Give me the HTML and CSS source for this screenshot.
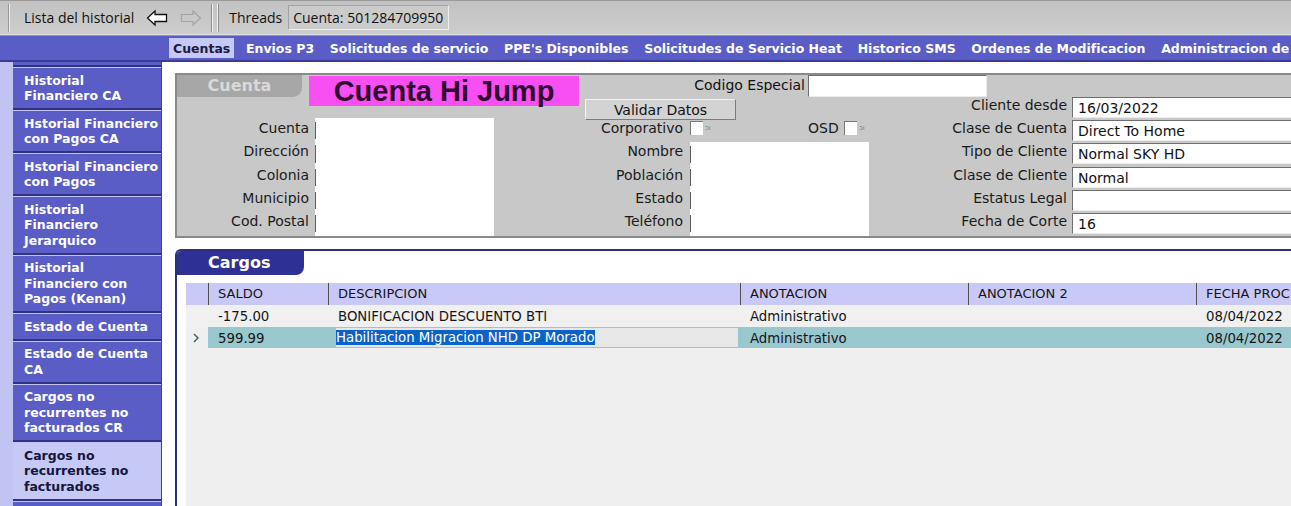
FILE: index.html
```html
<!DOCTYPE html>
<html lang="es">
<head>
<meta charset="utf-8">
<title>Cargos no recurrentes</title>
<link rel="stylesheet" href="styles.css">
</head>
<body>
<header class="toolbar">
  <span class="tb-sep"></span>
  <span class="tb-text tb-hist">Lista del historial</span>
  <svg class="tb-arrow back" width="22" height="18" viewBox="0 0 22 18"><path d="M1.5 9 L9 2 L9 5.5 L20.5 5.5 L20.5 12.5 L9 12.5 L9 16 Z" fill="#fff" stroke="#111" stroke-width="1.3"/></svg>
  <svg class="tb-arrow fwd" width="22" height="18" viewBox="0 0 22 18"><path d="M20.5 9 L13 2 L13 5.5 L1.5 5.5 L1.5 12.5 L13 12.5 L13 16 Z" fill="none" stroke="#a4a4a4" stroke-width="1.2"/></svg>
  <span class="tb-sep2"></span>
  <span class="tb-text tb-threads">Threads</span>
  <span class="tb-box">Cuenta: 501284709950</span>
</header>

<nav class="tabs">
  <span class="tab active">Cuentas</span>
  <span class="tab">Envios P3</span>
  <span class="tab">Solicitudes de servicio</span>
  <span class="tab">PPE's Disponibles</span>
  <span class="tab">Solicitudes de Servicio Heat</span>
  <span class="tab">Historico SMS</span>
  <span class="tab">Ordenes de Modificacion</span>
  <span class="tab">Administracion de</span>
</nav>

<div class="main">
  <aside class="side">
    <div class="side-item tail"></div>
    <div class="side-item">Historial<br>Financiero CA</div>
    <div class="side-item">Hstorial Financiero<br>con Pagos CA</div>
    <div class="side-item">Hstorial Financiero<br>con Pagos</div>
    <div class="side-item">Historial<br>Financiero<br>Jerarquico</div>
    <div class="side-item">Historial<br>Financiero con<br>Pagos (Kenan)</div>
    <div class="side-item">Estado de Cuenta</div>
    <div class="side-item">Estado de Cuenta<br>CA</div>
    <div class="side-item">Cargos no<br>recurrentes no<br>facturados CR</div>
    <div class="side-item selected">Cargos no<br>recurrentes no<br>facturados</div>
    <div class="side-item"></div>
  </aside>

  <section class="content">
    <div class="acct">
      <div class="acct-top">
        <div class="acct-tab">Cuenta</div>
        <div class="hijump">Cuenta Hi Jump</div>
        <span class="codigo-lbl">Codigo Especial</span>
        <div class="fld codigo"></div>
      </div>
      <div class="acct-grid">
        <button class="validar">Validar Datos</button>
        <span class="lbl c5 r1">Cliente desde</span>
        <div class="fld c6 r1">16/03/2022</div>

        <span class="lbl c1 r2">Cuenta</span>
        <div class="blk blk-left">
          <span class="blk-row"></span><span class="blk-row"></span><span class="blk-row"></span><span class="blk-row"></span><span class="blk-row"></span>
        </div>
        <span class="lbl c3 r2">Corporativo</span>
        <div class="checks">
          <span class="cb"></span><span class="mark">ɔı</span>
          <span class="osd">OSD</span>
          <span class="cb"></span><span class="mark">ɔı</span>
        </div>
        <span class="lbl c5 r2">Clase de Cuenta</span>
        <div class="fld c6 r2">Direct To Home</div>

        <span class="lbl c1 r3">Dirección</span>
        <span class="lbl c3 r3">Nombre</span>
        <div class="blk blk-mid">
          <span class="blk-row"></span><span class="blk-row"></span><span class="blk-row"></span><span class="blk-row"></span>
        </div>
        <span class="lbl c5 r3">Tipo de Cliente</span>
        <div class="fld c6 r3">Normal SKY HD</div>

        <span class="lbl c1 r4">Colonia</span>
        <span class="lbl c3 r4">Población</span>
        <span class="lbl c5 r4">Clase de Cliente</span>
        <div class="fld c6 r4">Normal</div>

        <span class="lbl c1 r5">Municipio</span>
        <span class="lbl c3 r5">Estado</span>
        <span class="lbl c5 r5">Estatus Legal</span>
        <div class="fld c6 r5"></div>

        <span class="lbl c1 r6">Cod. Postal</span>
        <span class="lbl c3 r6">Teléfono</span>
        <span class="lbl c5 r6">Fecha de Corte</span>
        <div class="fld c6 r6">16</div>
      </div>
    </div>

    <div class="cargos">
      <div class="cargos-tab">Cargos</div>
      <div class="grid">
        <div class="grow ghead">
          <span class="ind"></span>
          <span class="gc w-saldo">SALDO</span>
          <span class="gc w-desc">DESCRIPCION</span>
          <span class="gc w-anot">ANOTACION</span>
          <span class="gc w-anot">ANOTACION 2</span>
          <span class="gc w-fecha">FECHA PROC</span>
        </div>
        <div class="grow r-one">
          <span class="ind"></span>
          <span class="gc w-saldo">-175.00</span>
          <span class="gc w-desc">BONIFICACION DESCUENTO BTI</span>
          <span class="gc w-anot">Administrativo</span>
          <span class="gc w-anot"></span>
          <span class="gc w-fecha">08/04/2022</span>
        </div>
        <div class="grow r-sel">
          <span class="ind"><svg width="6" height="10" viewBox="0 0 6 10"><path d="M1 1 L5 5 L1 9" fill="none" stroke="#3e5769" stroke-width="1.4"/></svg></span>
          <span class="gc w-saldo">599.99</span>
          <span class="gc w-desc"><span class="editor"><span class="hl">Habilitacion Migracion NHD DP Morado</span></span></span>
          <span class="gc w-anot">Administrativo</span>
          <span class="gc w-anot"></span>
          <span class="gc w-fecha">08/04/2022</span>
        </div>
      </div>
    </div>
  </section>
</div>
</body>
</html>
```

FILE: styles.css
```css
* { box-sizing: border-box; }
html, body { margin: 0; padding: 0; }
body {
  width: 1291px;
  height: 506px;
  overflow: hidden;
  background: #fff;
  font-family: "DejaVu Sans", Verdana, sans-serif;
  color: #111;
}

/* ---------- toolbar ---------- */
.toolbar {
  height: 35px;
  display: flex;
  align-items: center;
  background: linear-gradient(#c2c2c2, #cdcdcd);
  border-top: 1px solid #9a9a9a;
  border-bottom: 1px solid #e0e0e0;
  font-family: "Open Sans", "Noto Sans", sans-serif;
  font-size: 14px;
  color: #111;
  white-space: nowrap;
}
.tb-sep {
  margin-left: 8px;
  width: 2px;
  height: 28px;
  border-left: 1px solid #979797;
  border-right: 1px solid #ededed;
}
.tb-hist { margin-left: 14px; }
.tb-arrow { margin-left: 12px; flex: none; }
.tb-sep2 {
  margin-left: 9px;
  width: 8px;
  height: 28px;
  border-left: 1px solid #8e8e8e;
  border-right: 1px solid #8e8e8e;
  box-shadow: inset 1px 0 0 #f2f2f2, inset -1px 0 0 #f2f2f2;
}
.tb-threads { margin-left: 10px; }
.tb-box {
  margin-left: 6px;
  width: 161px;
  height: 25px;
  line-height: 23px;
  padding-left: 4px;
  border: 1px solid;
  border-color: #a2a2a2 #eeeeee #eeeeee #a2a2a2;
  background: #cbcbcb;
}

/* ---------- nav tabs ---------- */
.tabs {
  height: 27px;
  display: flex;
  align-items: center;
  padding-left: 169px;
  background: #5a5dc6;
  border-top: 1px solid #8b8ee2;
  border-bottom: 2px solid #383b98;
  white-space: nowrap;
  overflow: hidden;
}
.tab {
  flex: none;
  height: 20px;
  line-height: 21px;
  padding: 0 4px;
  margin-right: 7.7px;
  font-size: 12.5px;
  font-weight: bold;
  color: #fff;
}
.tab.active {
  background: #c6c8f5;
  color: #1b1b40;
}

/* ---------- main ---------- */
.main {
  display: flex;
  height: 444px;
}
.side {
  flex: none;
  width: 162px;
  background: #c1c3f3;
  padding-left: 13px;
  border-right: 1px solid #3f4290;
  overflow: hidden;
}
.side-item {
  background: #5a5dc6;
  color: #fff;
  font-size: 12.5px;
  font-weight: bold;
  line-height: 15.5px;
  padding: 4.5px 0 4.5px 11px;
  border-bottom: 2px solid #2f3285;
  margin-bottom: 1px;
  white-space: nowrap;
  min-height: 24px;
}
.side-item.tail {
  min-height: 0;
  height: 5px;
  padding: 0;
}
.side-item.selected {
  background: #c6c8f5;
  color: #15153a;
}

.content {
  flex: 1;
  padding: 11px 0 0 13px;
  overflow: hidden;
}

/* ---------- account panel ---------- */
.acct {
  width: 1130px;
  height: 165px;
  background: #c8c8c8;
  border: 2px solid #8a8a8a;
  border-right: none;
}
.acct-top {
  display: flex;
  align-items: flex-start;
  height: 22px;
}
.acct-tab {
  flex: none;
  width: 125px;
  height: 22px;
  background: #a7a7a7;
  border-bottom-right-radius: 9px;
  color: #d9d9d9;
  font-size: 16px;
  font-weight: bold;
  line-height: 22px;
  text-align: center;
}
.hijump {
  flex: none;
  margin-left: 7px;
  margin-top: 1px;
  width: 270px;
  height: 30px;
  background: #f84ff2;
  color: #2e0a30;
  font-family: "Liberation Sans", Arial, sans-serif;
  font-size: 29px;
  font-weight: bold;
  line-height: 31px;
  text-align: center;
  white-space: nowrap;
}
.codigo-lbl {
  flex: none;
  width: 229px;
  text-align: right;
  padding-right: 3px;
  font-size: 14px;
  line-height: 20px;
}
.fld {
  background: #fff;
  border-top: 1px solid #6e6e6e;
  border-left: 1px solid #6e6e6e;
  border-right: 1px solid #ebebeb;
  border-bottom: 1px solid #ebebeb;
  height: 21px;
  padding-left: 5px;
  font-size: 14px;
  line-height: 20px;
  color: #111;
  white-space: nowrap;
}
.fld.codigo {
  flex: none;
  width: 179px;
  height: 22px;
}

.acct-grid {
  display: grid;
  grid-template-columns: 138px 179px 196px 179px 203px 220px;
  grid-template-rows: repeat(6, 23.2px);
}
.lbl {
  font-size: 14px;
  line-height: 16px;
  text-align: right;
  align-self: start;
  white-space: nowrap;
  color: #1a1a1a;
}
.c1 { grid-column: 1; padding-right: 6px; }
.c3 { grid-column: 3; padding-right: 7px; }
.c5 { grid-column: 5; padding-right: 5px; }
.c6 { grid-column: 6; }
.r1 { grid-row: 1; }
.r2 { grid-row: 2; }
.r3 { grid-row: 3; }
.r4 { grid-row: 4; }
.r5 { grid-row: 5; }
.r6 { grid-row: 6; }

.validar {
  grid-column: 3 / span 2;
  grid-row: 1;
  justify-self: start;
  align-self: start;
  margin: 2px 0 0 91px;
  width: 151px;
  height: 21px;
  padding: 1px 0 0;
  background: #d3d3d3;
  border: 1px solid;
  border-color: #f2f2f2 #7c7c7c #7c7c7c #f2f2f2;
  font-family: "DejaVu Sans", Verdana, sans-serif;
  font-size: 14px;
  line-height: 19px;
  color: #111;
}

.blk {
  background: #fff;
  display: flex;
  flex-direction: column;
  padding: 1px 0;
}
.blk-left {
  grid-column: 2;
  grid-row: 2 / span 5;
  margin-top: -2px;
}
.blk-mid {
  grid-column: 4;
  grid-row: 3 / span 4;
  margin-top: -1px;
}
.blk-row {
  flex: 1;
  margin: 3px 0;
  border-left: 1px solid #5c5c5c;
}

.checks {
  grid-column: 4;
  grid-row: 2;
  display: grid;
  grid-template-columns: 13px 105px 36px 13px 1fr;
  align-items: start;
  margin-top: 1px;
}
.cb {
  width: 13px;
  height: 14px;
  background: #fff;
  border-top: 1px solid #777;
  border-left: 1px solid #777;
}
.mark {
  font-size: 7px;
  line-height: 15px;
  color: #7a7a7a;
  padding-left: 2px;
}
.osd {
  font-size: 14px;
  line-height: 14px;
  color: #1a1a1a;
}

/* ---------- cargos panel ---------- */
.cargos {
  margin-top: 11px;
  width: 1130px;
  height: 270px;
  background: #fff;
  border-top: 2px solid #2d3081;
  border-left: 2px solid #2d3081;
  border-top-left-radius: 6px;
}
.cargos-tab {
  width: 127px;
  height: 24px;
  background: #2e3193;
  border-top-left-radius: 4px;
  border-bottom-right-radius: 8px;
  color: #fff;
  font-size: 16px;
  font-weight: bold;
  line-height: 24px;
  padding-left: 31px;
}
.grid {
  margin: 8px 0 0 9px;
  height: 240px;
  background: #efefef;
  font-size: 13.3px;
}
.grow {
  display: flex;
  height: 22px;
  white-space: nowrap;
}
.ghead { background: #c9c9f8; font-size: 13px; }
.r-one { background: #f0f0f0; }
.r-sel { background: #98c8ce; height: 21px; }
.ind {
  flex: none;
  width: 22px;
  display: flex;
  align-items: center;
  padding-left: 7px;
}
.r-sel .ind { background: #efefef; }
.gc {
  flex: none;
  padding-left: 10px;
  padding-top: 1px;
  line-height: 22px;
  overflow: hidden;
  color: #151515;
}
.r-sel .gc { line-height: 21px; }
.ghead .gc {
  border-left: 1px solid #4f4f4f;
  padding-left: 9px;
  padding-top: 0;
}
.w-saldo { width: 120px; }
.w-desc { width: 412px; }
.w-anot { width: 228px; }
.w-fecha { width: 160px; }
.r-sel .w-desc {
  padding-left: 8px;
  padding-top: 1px;
}
.editor {
  display: block;
  width: 402px;
  height: 19px;
  line-height: 19px;
  background: #e7e7e7;
}
.hl {
  background: #0c63c7;
  color: #fff;
}
```
